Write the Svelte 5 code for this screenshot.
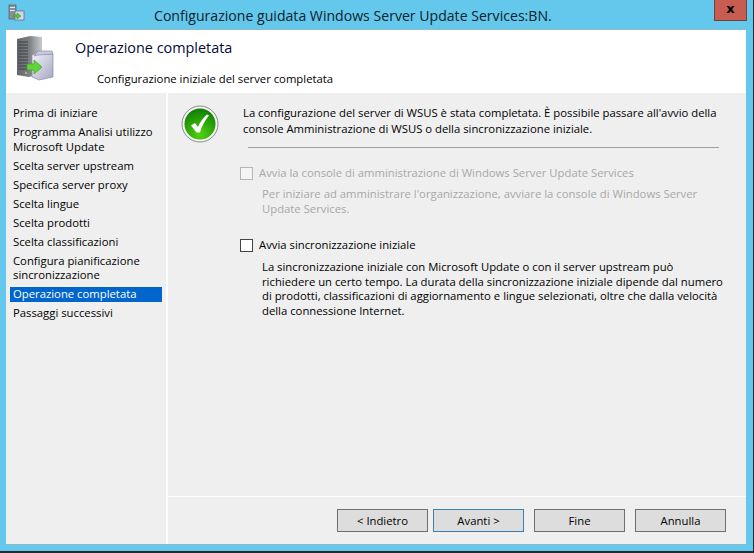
<script lang="ts">
  const steps = [
    'Prima di iniziare',
    'Programma Analisi utilizzo Microsoft Update',
    'Scelta server upstream',
    'Specifica server proxy',
    'Scelta lingue',
    'Scelta prodotti',
    'Scelta classificazioni',
    'Configura pianificazione sincronizzazione',
    'Operazione completata',
    'Passaggi successivi'
  ];
  const current = 'Operazione completata';
  const buttons = ['< Indietro', 'Avanti >', 'Fine', 'Annulla'];
</script>

<div class="window">
  <div class="titlebar">
    <svg class="app-icon" width="18" height="18" viewBox="0 0 18 18">
      <rect x="2" y="1" width="7" height="14" fill="#8a9199" stroke="#555c66" stroke-width="0.7" />
      <rect x="3" y="3" width="5" height="1" fill="#e4e7ea" />
      <rect x="3" y="6" width="5" height="1" fill="#e4e7ea" />
      <rect x="8" y="7" width="9" height="9" fill="#d6d8ea" stroke="#6a6f8c" stroke-width="0.8" />
      <path d="M6 11h4V9l4 3-4 3v-2H6z" fill="#55c83a" stroke="#2f8a1e" stroke-width="0.5" />
    </svg>
    <div class="title">Configurazione guidata Windows Server Update Services:BN.</div>
    <div class="close">x</div>
  </div>

  <div class="client">
    <header class="head">
      <svg class="head-icon" width="44" height="48" viewBox="0 0 44 48">
        <defs>
          <linearGradient id="tower" x1="0" x2="1" y1="0" y2="0">
            <stop offset="0" stop-color="#63676c" />
            <stop offset="0.5" stop-color="#7d8185" />
            <stop offset="1" stop-color="#c9ccce" />
          </linearGradient>
          <linearGradient id="box" x1="0" x2="1" y1="0" y2="1">
            <stop offset="0" stop-color="#f4f4fa" />
            <stop offset="1" stop-color="#a4a6c2" />
          </linearGradient>
        </defs>
        <path d="M1 4l13-3 12 1v36l-13 4-12-2z" fill="url(#tower)" />
        <path d="M2 7h10M2 10h10M2 13h10M2 16h10M2 19h10M2 22h10M2 25h10M2 28h10M2 31h10M2 34h10" stroke="#41454a" stroke-width="1" />
        <circle cx="10" cy="38" r="1" fill="#9be04c" />
        <path d="M16 20l5-2 16 1v23l-14 3-7-3z" fill="url(#box)" stroke="#7c7e9e" stroke-width="0.6" />
        <path d="M18 21l4-5h14l1 3-15 1z" fill="#c9cae0" stroke="#7c7e9e" stroke-width="0.6" />
        <path d="M11 29h7v-4l8 7-8 7v-4h-7z" fill="#62d638" stroke="#3d9e26" stroke-width="0.7" />
      </svg>
      <div class="head-text">
        <h1>Operazione completata</h1>
        <p>Configurazione iniziale del server completata</p>
      </div>
    </header>

    <div class="body">
      <nav class="steps">
        {#each steps as step}
          <div class="step" class:active={step === current}>{step}</div>
        {/each}
      </nav>

      <main class="pane">
        <div class="content">
          <svg class="ok" width="38" height="38" viewBox="0 0 38 38">
            <defs>
              <radialGradient id="green" cx="0.5" cy="0.85" r="0.85">
                <stop offset="0" stop-color="#4fd30e" />
                <stop offset="1" stop-color="#0f7d05" />
              </radialGradient>
            </defs>
            <circle cx="19" cy="19" r="18" fill="#f4f4f4" stroke="#8c8c8c" />
            <circle cx="19" cy="19" r="15.5" fill="url(#green)" />
            <path d="M10 20.500l4-2.500 3 4c2-5 5-9 9-12.500l2 1c-4 5-7 10-9 17h-3.500z" fill="#fff" />
          </svg>
          <div class="texts">
            <p class="intro">La configurazione del server di WSUS è stata completata. È possibile passare all'avvio della console Amministrazione di WSUS o della sincronizzazione iniziale.</p>
            <div class="rule"></div>

            <label class="check disabled">
              <span class="box"></span>
              Avvia la console di amministrazione di Windows Server Update Services
            </label>
            <p class="note disabled">Per iniziare ad amministrare l'organizzazione, avviare la console di Windows Server Update Services.</p>

            <label class="check second">
              <span class="box"></span>
              Avvia sincronizzazione iniziale
            </label>
            <p class="note long">La sincronizzazione iniziale con Microsoft Update o con il server upstream può<br />richiedere un certo tempo. La durata della sincronizzazione iniziale dipende dal numero<br />di prodotti, classificazioni di aggiornamento e lingue selezionati, oltre che dalla velocità<br />della connessione Internet.</p>
          </div>
        </div>

        <footer class="actions">
          {#each buttons as label, i}
            <button class:focus={i === 1} class:paired={i === 0}>{label}</button>
          {/each}
        </footer>
      </main>
    </div>
  </div>
</div>

<style>
  :global(body) {
    margin: 0;
    background: #252b2e;
  }

  .window {
    width: 753px;
    height: 551px;
    box-sizing: border-box;
    display: flex;
    flex-direction: column;
    padding: 0 7px 7px 6px;
    background: #63c8ec;
    font-family: "Open Sans", "Noto Sans", sans-serif;
    font-size: 11.3px;
    color: #000;
  }

  .titlebar {
    height: 30px;
    flex: none;
    display: flex;
    align-items: center;
    position: relative;
  }

  .app-icon {
    margin: -4px 0 0 1px;
  }

  .title {
    margin-left: 129px;
    font-size: 14.1px;
    white-space: nowrap;
    color: #10222c;
  }

  .close {
    position: absolute;
    top: 0;
    right: -1px;
    width: 33px;
    height: 21px;
    box-sizing: border-box;
    background: #c75c51;
    border: 1px solid #73403e;
    border-top: none;
    color: #000;
    font: bold 13px/17px "DejaVu Sans", sans-serif;
    text-align: center;
  }

  .client {
    flex: 1;
    display: flex;
    flex-direction: column;
    background: #efefef;
    box-shadow: 0 -1px 0 #8fb8c8, 0 1px 0 #8fb8c8;
    min-height: 0;
  }

  .head {
    height: 63px;
    flex: none;
    display: flex;
    background: #fff;
  }

  .head-icon {
    margin: 5px 0 0 10px;
  }

  .head-text {
    margin-left: 15px;
  }

  h1 {
    margin: 8px 0 0;
    font-size: 14.4px;
    font-weight: 400;
    color: #000c3a;
  }

  .head-text p {
    margin: 14px 0 0 22px;
    color: #000;
  }

  .body {
    flex: 1;
    display: flex;
    min-height: 0;
  }

  .steps {
    width: 160px;
    flex: none;
    box-sizing: border-box;
    display: flex;
    flex-direction: column;
    padding: 11px 4px 0;
  }

  .step {
    margin: 2px 0;
    padding: 0 3px 0.500px;
    line-height: 14.500px;
  }

  .step.active {
    background: #0066cc;
    color: #fff;
  }

  .pane {
    flex: 1;
    display: flex;
    flex-direction: column;
    border-left: 2px solid #fff;
  }

  .content {
    flex: 1;
    display: flex;
    align-items: flex-start;
    padding: 12px 27px 0 13px;
    border-bottom: 1px solid #fff;
  }

  .ok {
    flex: none;
  }

  .texts {
    margin-left: 24px;
    flex: 1;
  }

  .intro {
    margin: 0;
    line-height: 16px;
  }

  .rule {
    height: 1px;
    background: #a0a0a0;
    margin: 10px 0 0 5px;
  }

  .check {
    display: flex;
    align-items: center;
    gap: 6px;
    margin: 17px 0 0 -3px;
    line-height: 16px;
  }

  .check.second {
    margin-top: 21px;
  }

  .box {
    width: 11px;
    height: 11px;
    background: #fff;
    border: 1px solid #444;
    flex: none;
  }

  .disabled {
    color: #a8a8a8;
  }

  .disabled .box {
    border-color: #b5b5b5;
    background: #f4f4f4;
  }

  .note {
    margin: 5px 0 0 19px;
    line-height: 15px;
  }

  .note.long {
    margin: 7px -12px 0 19px;
    line-height: 14.700px;
    white-space: nowrap;
  }

  .actions {
    flex: none;
    height: 47px;
    box-sizing: border-box;
    display: flex;
    justify-content: flex-end;
    gap: 10px;
    padding: 12px 20px 0 0;
  }

  button {
    width: 91px;
    height: 23px;
    box-sizing: border-box;
    padding: 0;
    background: #dddddd;
    border: 1px solid #707070;
    border-radius: 0;
    font: inherit;
    color: #000;
  }

  button.paired {
    margin-right: -5px;
  }

  button.focus {
    border-color: #3c7fb1;
  }
</style>
